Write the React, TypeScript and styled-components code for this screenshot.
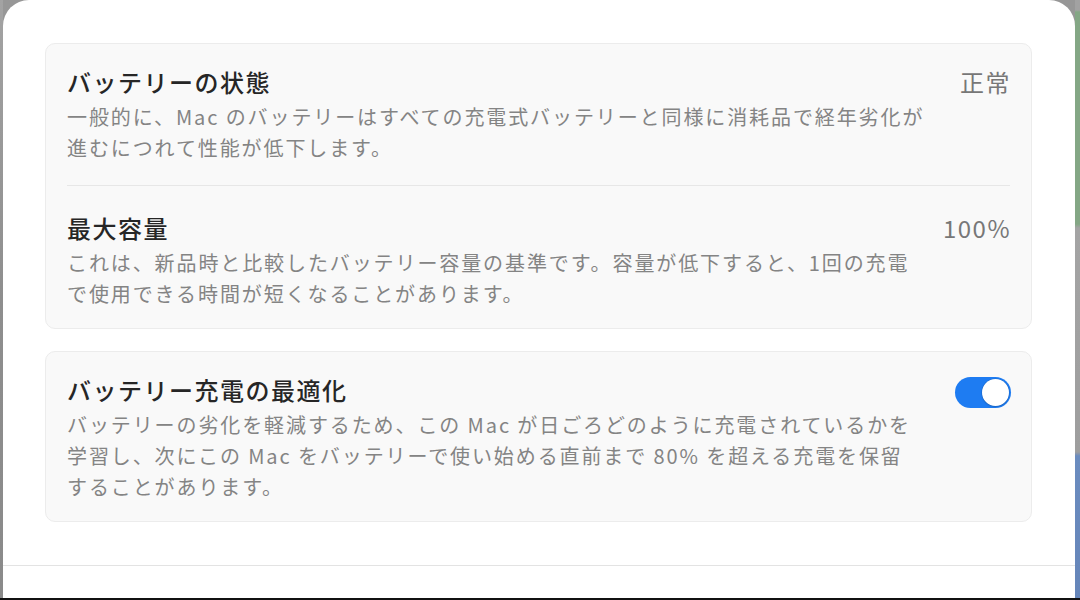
import React from 'react';
import styled, { createGlobalStyle } from 'styled-components';

const GlobalStyle = createGlobalStyle`
	html, body {
		margin: 0;
		padding: 0;
		background: #9c9c9c;
	}
	body {
		font-family: 'Noto Sans CJK JP', 'Noto Sans', sans-serif;
		-webkit-font-smoothing: antialiased;
	}
`;

const Screen = styled.div`
	width: 1080px;
	height: 600px;
	display: flex;
	flex-direction: column;
	overflow: hidden;
`;

const Desktop = styled.div`
	flex: 1;
	min-height: 0;
	display: flex;
	background: #979797;
`;

const BottomBar = styled.div`
	height: 2px;
	flex-shrink: 0;
	background: #111111;
`;

const LeftEdge = styled.div`
	width: 3px;
	flex-shrink: 0;
	background: linear-gradient(180deg, #a3a3a3 0%, #8e8e8e 50%, #8a8a8a 100%);
`;

const RightEdge = styled.div`
	width: 5px;
	flex-shrink: 0;
	background: linear-gradient(
		180deg,
		#a2a2a2 0px,
		#a2a2a2 10px,
		#84a785 12px,
		#84a785 224px,
		#a4a4a4 228px,
		#9e9e9e 452px,
		#6b8cbf 456px,
		#6585b9 100%
	);
`;

const Sheet = styled.div`
	flex: 1;
	min-width: 0;
	display: flex;
	flex-direction: column;
	background: #ffffff;
	border-radius: 26px 26px 0 0;
`;

const Content = styled.div`
	flex: 1;
	display: flex;
	flex-direction: column;
	gap: 22px;
	padding: 43px 43px 0 42px;
`;

const Footer = styled.div`
	height: 32px;
	border-top: 1px solid #e3e3e3;
`;

const Card = styled.section`
	background: #f9f9f9;
	border: 1px solid #ececec;
	border-radius: 10px;
	padding: 0 20px 0 21px;
`;

const Row = styled.div`
	display: flex;
	justify-content: space-between;
	align-items: flex-start;
	padding: 23px 0 19px;
`;

const Divider = styled.div`
	height: 1px;
	background: #e7e7e7;
	margin: 3px 1px 4px 0;
`;

const TextBlock = styled.div`
	display: flex;
	flex-direction: column;
	gap: 4px;
`;

const Title = styled.div`
	font-size: 24px;
	line-height: 30px;
	font-weight: 500;
	letter-spacing: 1.5px;
	color: #262626;
	white-space: nowrap;
`;

const Desc = styled.div`
	font-size: 20px;
	line-height: 31px;
	letter-spacing: 1.9px;
	color: #848484;
	white-space: nowrap;
`;

const Value = styled.div`
	font-size: 24px;
	line-height: 30px;
	letter-spacing: 1.5px;
	color: #777777;
	white-space: nowrap;
`;

const Toggle = styled.div<{ $on: boolean }>`
	margin-top: 2px;
	width: 56px;
	height: 31px;
	box-sizing: border-box;
	border-radius: 16px;
	background: ${(p) => (p.$on ? '#1e7cf2' : '#dcdcdc')};
	display: flex;
	align-items: center;
	justify-content: ${(p) => (p.$on ? 'flex-end' : 'flex-start')};
	padding: 0 2px;
`;

const Knob = styled.div`
	width: 27px;
	height: 27px;
	border-radius: 50%;
	background: #ffffff;
	box-shadow: 0 0 0 0.5px rgba(0, 0, 0, 0.12), 0 1px 2px rgba(0, 0, 0, 0.15);
`;

const App = () => {
	return (
		<>
			<GlobalStyle />
			<Screen>
				<Desktop>
					<LeftEdge />
					<Sheet>
						<Content>
							<Card>
								<Row>
									<TextBlock>
										<Title>バッテリーの状態</Title>
										<Desc>
											一般的に、Mac のバッテリーはすべての充電式バッテリーと同様に消耗品で経年劣化が
											<br />
											進むにつれて性能が低下します。
										</Desc>
									</TextBlock>
									<Value>正常</Value>
								</Row>
								<Divider />
								<Row>
									<TextBlock>
										<Title>最大容量</Title>
										<Desc>
											これは、新品時と比較したバッテリー容量の基準です。容量が低下すると、1回の充電
											<br />
											で使用できる時間が短くなることがあります。
										</Desc>
									</TextBlock>
									<Value>100%</Value>
								</Row>
							</Card>
							<Card>
								<Row>
									<TextBlock>
										<Title>バッテリー充電の最適化</Title>
										<Desc>
											バッテリーの劣化を軽減するため、この Mac が日ごろどのように充電されているかを
											<br />
											学習し、次にこの Mac をバッテリーで使い始める直前まで 80% を超える充電を保留
											<br />
											することがあります。
										</Desc>
									</TextBlock>
									<Toggle $on>
										<Knob />
									</Toggle>
								</Row>
							</Card>
						</Content>
						<Footer />
					</Sheet>
					<RightEdge />
				</Desktop>
				<BottomBar />
			</Screen>
		</>
	);
};

export default App;
